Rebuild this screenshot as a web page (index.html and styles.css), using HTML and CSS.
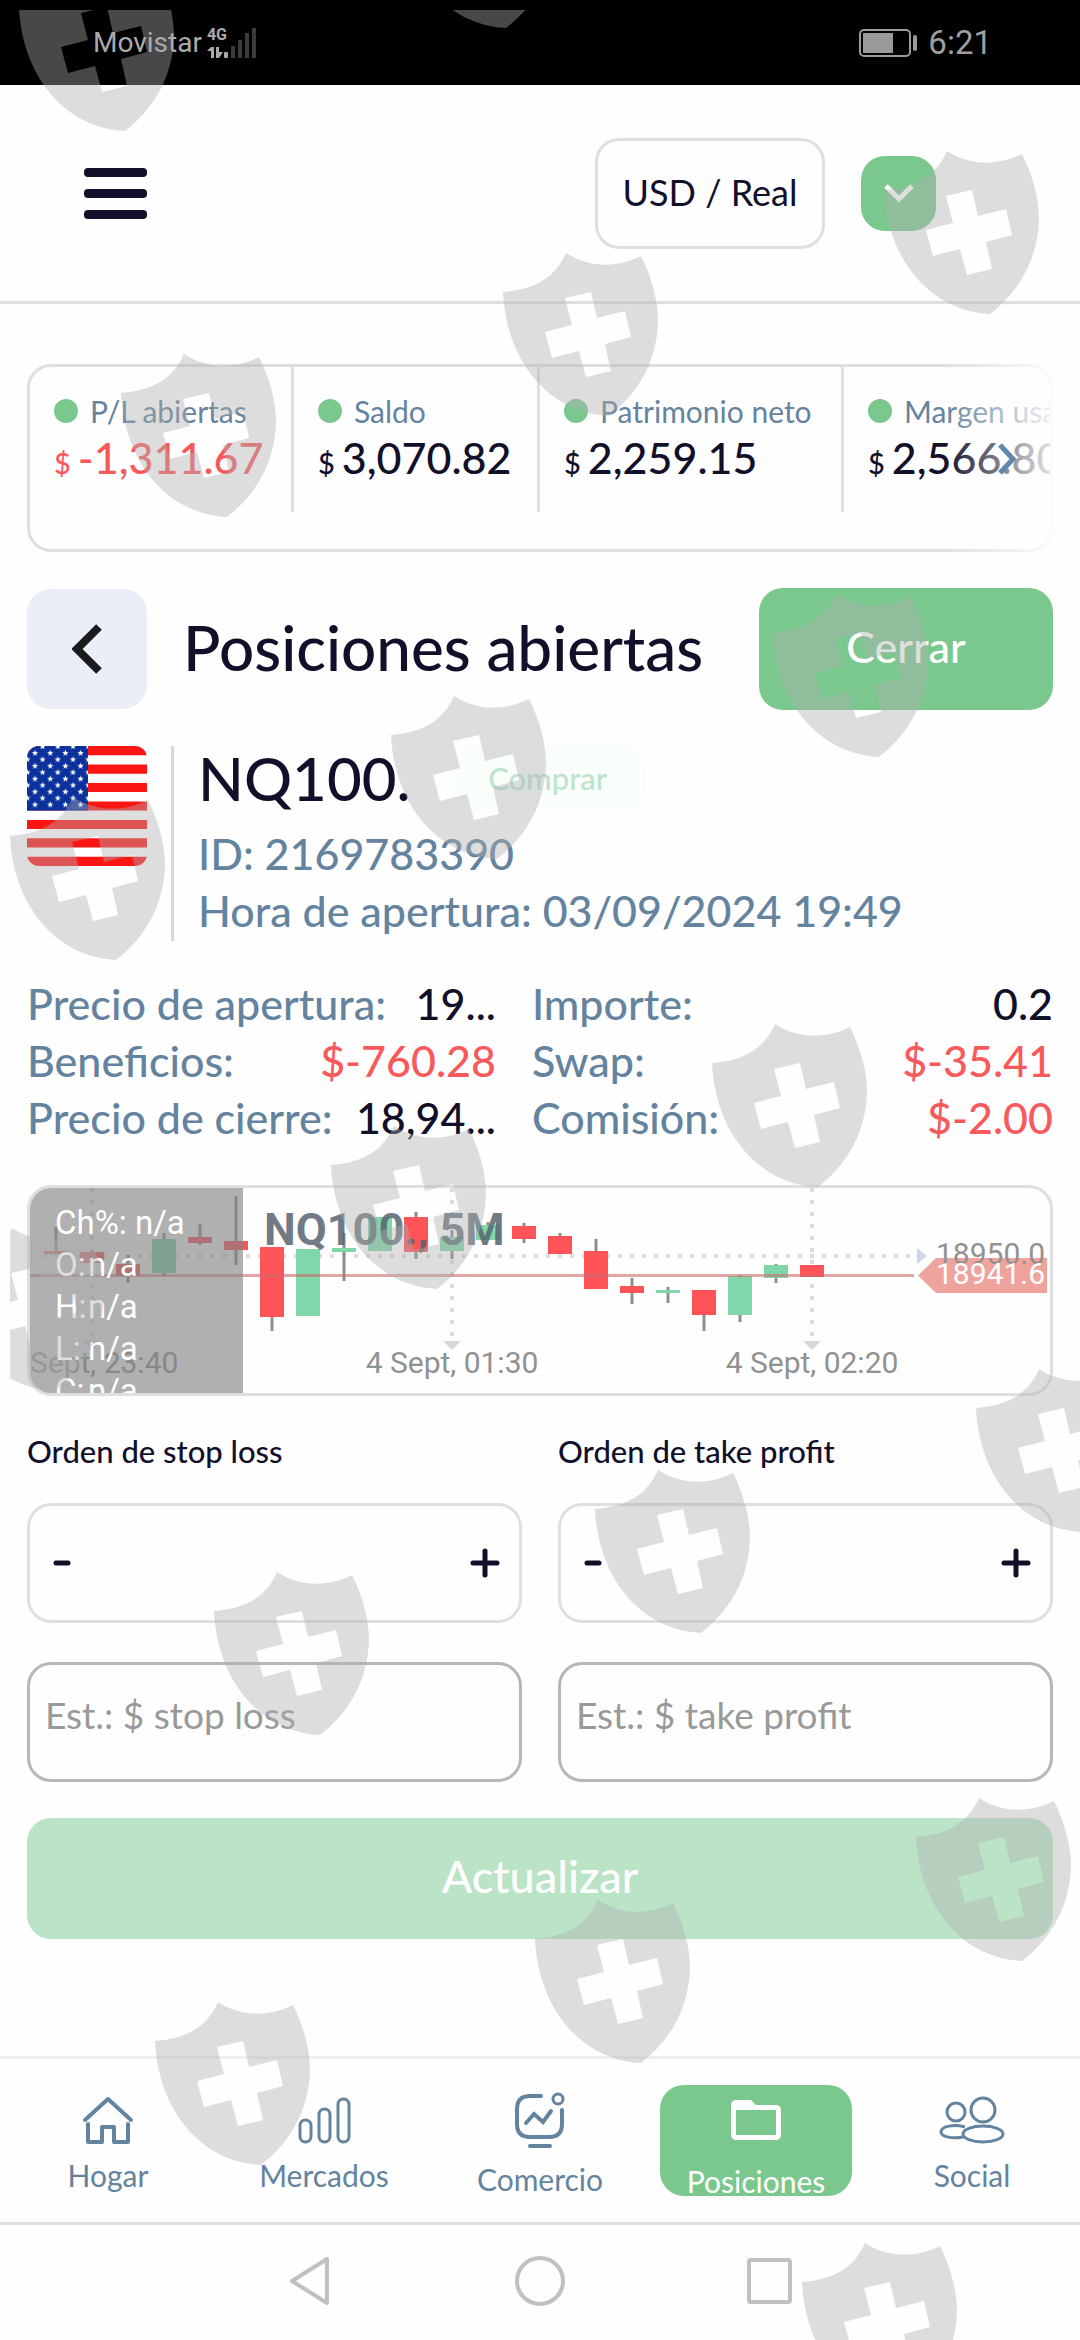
FILE: index.html
```html
<!DOCTYPE html>
<html lang="es">
<head>
<meta charset="utf-8">
<meta name="viewport" content="width=device-width, initial-scale=1">
<title>Posiciones abiertas</title>
<link rel="stylesheet" href="styles.css">
</head>
<body>
<div class="status">
  <span class="carrier">Movistar</span>
  <span class="network">
    <span class="network-type">4G</span>
    <svg width="22" height="12" viewBox="0 0 22 12" fill="#aaa"><path d="M0 4l4-4h3v11H4V4zM9 0h3v5h4l-4 6H9z"/><rect x="17" y="5" width="4" height="6" rx="1"/></svg>
  </span>
  <svg class="signal" width="26" height="30" viewBox="0 0 26 30" fill="#3b3b3b"><rect y="18" width="4" height="12"/><rect x="7" y="12" width="4" height="18"/><rect x="14" y="5" width="4" height="25"/><rect x="21" width="4" height="30"/></svg>
  <svg class="battery" width="59" height="28" viewBox="0 0 59 28"><rect x="1" y="1" width="50" height="26" rx="4" fill="none" stroke="#9a9a9a" stroke-width="2"/><rect x="4" y="4" width="30" height="20" fill="#9a9a9a"/><rect x="54" y="6" width="4" height="16" rx="2" fill="#9a9a9a"/></svg>
  <span class="clock">6:21</span>
</div>

<header class="header">
  <button class="menu" aria-label="Menú"><span></span><span></span><span></span></button>
  <button class="account">USD / Real</button>
  <button class="expand" aria-label="Desplegar"><svg width="32" height="20" viewBox="0 0 32 20" fill="none" stroke="#fff" stroke-width="5"><path d="M3 3l13 13L29 3"/></svg></button>
</header>

<main class="content">
  <div class="stats-wrap">
    <section class="stats">
      <div class="stat">
        <div class="stat-label"><i class="dot"></i>P/L abiertas</div>
        <div class="stat-value negative"><small>$</small>-1,311.67</div>
      </div>
      <div class="stat">
        <div class="stat-label"><i class="dot"></i>Saldo</div>
        <div class="stat-value"><small>$</small>3,070.82</div>
      </div>
      <div class="stat">
        <div class="stat-label"><i class="dot"></i>Patrimonio neto</div>
        <div class="stat-value"><small>$</small>2,259.15</div>
      </div>
      <div class="stat">
        <div class="stat-label"><i class="dot"></i>Margen usado</div>
        <div class="stat-value"><small>$</small>2,566.80</div>
      </div>
    </section>
    <div class="fade"><svg width="20" height="32" viewBox="0 0 20 32" fill="none" stroke="#5f88ab" stroke-width="5"><path d="M2 2l13 14L2 30"/></svg></div>
  </div>

  <div class="title-row">
    <button class="back" aria-label="Volver"><svg width="30" height="50" viewBox="0 0 30 50" fill="none" stroke="#1a1b1c" stroke-width="8"><path d="M27 3L5 25l22 22"/></svg></button>
    <h1 class="title">Posiciones abiertas</h1>
    <button class="close">Cerrar</button>
  </div>

  <section class="instrument">
    <svg class="flag" width="120" height="120" viewBox="0 0 120 120" aria-label="Estados Unidos">
      <defs>
        <path id="star" fill="#fff" d="M8 3.800l.8 2.200 2.300.1-1.800 1.500.6 2.200L8 8.500 6.100 9.800l.6-2.200L4.900 6.100 7.200 6z"/>
        <pattern id="stars" width="15.200" height="12.900" patternUnits="userSpaceOnUse">
          <use href="#star"/><use href="#star" x="-7.600" y="6.400"/><use href="#star" x="7.600" y="6.400"/><use href="#star" x="-7.600" y="-6.500"/><use href="#star" x="7.600" y="-6.500"/>
        </pattern>
      </defs>
      <rect width="120" height="120" fill="#fff"/>
      <path stroke="#fb1613" stroke-width="9.200" d="M0 4.600h120M0 23.100h120M0 41.500h120M0 60h120M0 78.500h120M0 96.900h120M0 115.400h120"/>
      <rect width="61" height="64.600" fill="#0b319c"/>
      <rect width="61" height="62" fill="url(#stars)"/>
    </svg>
    <div class="instrument-info">
      <div class="instrument-head"><h2 class="symbol">NQ100.</h2><span class="badge">Comprar</span></div>
      <p class="meta">ID: 2169783390</p>
      <p class="meta">Hora de apertura: 03/09/2024 19:49</p>
    </div>
  </section>

  <dl class="fields">
    <div class="field"><dt>Precio de apertura:</dt><dd>19...</dd></div>
    <div class="field"><dt>Importe:</dt><dd>0.2</dd></div>
    <div class="field"><dt>Beneficios:</dt><dd class="negative">$-760.28</dd></div>
    <div class="field"><dt>Swap:</dt><dd class="negative">$-35.41</dd></div>
    <div class="field"><dt>Precio de cierre:</dt><dd>18,94...</dd></div>
    <div class="field"><dt>Comisión:</dt><dd class="negative">$-2.00</dd></div>
  </dl>

  <section class="chart">
    <svg class="plot" viewBox="30 1188 1020 205">
      <g stroke="#dcdcdc" stroke-width="4" stroke-dasharray="4 8">
        <path d="M30 1256H913"/><path d="M92 1188V1336M452 1188V1336M812 1188V1336"/>
      </g>
      <path fill="#d8d8d8" d="M83 1341h18l-9 9zM443 1341h18l-9 9zM803 1341h18l-9 9z"/>
      <path fill="#cdd5e8" d="M917 1248l10 8-10 8z"/>
      <g stroke="#8e8e8e" stroke-width="3"><path d="M56 1227v27M92 1250v13M128 1255v28M164 1233v43M200 1224v21M236 1196v69M272 1247v84M344 1233v48M416 1212v47M452 1230v29M488 1222v18M524 1223v20M560 1233v20M596 1239v20M632 1278v26M668 1287v16M704 1290v41M740 1275v47M776 1264v19"/></g>
      <g fill="#ff5457"><path d="M44 1251h24v3H44zM80 1252h24v11H80zM116 1264h24v12h-24zM188 1237h24v6h-24zM224 1241h24v9h-24zM260 1247h24v70h-24zM404 1217h24v35h-24zM512 1226h24v13h-24zM548 1236h24v18h-24zM584 1251h24v38h-24zM620 1286h24v7h-24zM692 1290h24v25h-24zM800 1265h24v12h-24z"/></g>
      <g fill="#80d7a9"><path d="M152 1239h24v34h-24zM296 1249h24v67h-24zM332 1248h24v4h-24zM368 1217h24v34h-24zM440 1237h24v14h-24zM476 1225h24v15h-24zM656 1290h24v3h-24zM728 1276h24v39h-24zM764 1265h24v13h-24z"/></g>
      <path stroke="#cc6b6b" stroke-opacity=".6" stroke-width="3" d="M30 1275.500H914"/>
      <text class="plot-title" x="264" y="1245">NQ100., 5M</text>
      <g class="axis" text-anchor="middle"><text x="92" y="1373">4 Sept, 23:40</text><text x="452" y="1373">4 Sept, 01:30</text><text x="812" y="1373">4 Sept, 02:20</text></g>
      <path fill="#efa39d" d="M918 1275.500l18-17.500h111v35H936z"/>
      <text class="axis" x="936" y="1264">18950.0</text>
      <text class="axis current" x="936" y="1284">18941.6</text>
    </svg>
    <ul class="ohlc">
      <li>Ch%: n/a</li>
      <li><span>O:</span>n/a</li>
      <li><span>H:</span>n/a</li>
      <li><span>L:</span>n/a</li>
      <li><span>C:</span>n/a</li>
    </ul>
  </section>

  <form class="orders">
    <div class="order">
      <label class="order-label" for="sl">Orden de stop loss</label>
      <div class="stepper">
        <button type="button" class="step" aria-label="Menos"><svg width="18" height="30" viewBox="0 0 18 30"><path d="M3 15h12"/></svg></button>
        <input id="sl" class="amount" type="text">
        <button type="button" class="step" aria-label="Más"><svg width="30" height="30" viewBox="0 0 30 30"><path d="M3 15h24M15 3v24"/></svg></button>
      </div>
      <input class="estimate" type="text" placeholder="Est.: $ stop loss" aria-label="Est.: $ stop loss">
    </div>
    <div class="order">
      <label class="order-label" for="tp">Orden de take profit</label>
      <div class="stepper">
        <button type="button" class="step" aria-label="Menos"><svg width="18" height="30" viewBox="0 0 18 30"><path d="M3 15h12"/></svg></button>
        <input id="tp" class="amount" type="text">
        <button type="button" class="step" aria-label="Más"><svg width="30" height="30" viewBox="0 0 30 30"><path d="M3 15h24M15 3v24"/></svg></button>
      </div>
      <input class="estimate" type="text" placeholder="Est.: $ take profit" aria-label="Est.: $ take profit">
    </div>
    <button type="button" class="update">Actualizar</button>
  </form>
</main>

<nav class="tabs">
  <a class="tab" href="#hogar">
    <svg width="52" height="48" viewBox="0 0 52 48" stroke-width="4" stroke-linecap="round" stroke-linejoin="round"><path d="M3 24L26 3l23 21M6 28v18h14V31h12v15h14V28"/></svg>
    Hogar</a>
  <a class="tab" href="#mercados">
    <svg width="54" height="48" viewBox="0 0 54 48" stroke-width="3"><rect x="3" y="24" width="11" height="22" rx="5.500"/><rect x="22" y="13" width="11" height="33" rx="5.500"/><rect x="41" y="3" width="11" height="43" rx="5.500"/></svg>
    Mercados</a>
  <a class="tab" href="#comercio">
    <svg width="52" height="56" viewBox="0 0 52 56" stroke-width="4" stroke-linecap="round"><path d="M27 4H16Q3 4 3 17v15q0 13 13 13h19q13 0 13-13V18M16 54h20M12 31l8-9 9 8 8-11"/><circle cx="44" cy="7" r="5" stroke-width="3"/></svg>
    Comercio</a>
  <a class="tab active" href="#posiciones">
    <svg width="60" height="60" viewBox="0 0 24 24"><path fill="#fff" stroke="none" d="M20 6h-8l-2-2H4c-1.100 0-2 .9-2 2v12c0 1.100.9 2 2 2h16c1.100 0 2-.9 2-2V8c0-1.100-.9-2-2-2zm0 12H4V8h16z"/></svg>
    Posiciones</a>
  <a class="tab" href="#social">
    <svg width="66" height="48" viewBox="0 0 66 48" stroke-width="3"><circle cx="44" cy="14" r="12"/><ellipse cx="44" cy="38" rx="20" ry="8"/><circle cx="17" cy="16" r="9"/><path d="M26 31C15 28 2 30 2 36c0 5 12 7 22 5"/></svg>
    Social</a>
</nav>

<div class="system">
  <button aria-label="Atrás"><svg width="48" height="52" viewBox="0 0 48 52"><path d="M6 26L41 4v44z"/></svg></button>
  <button aria-label="Inicio"><svg width="52" height="52" viewBox="0 0 52 52"><circle cx="26" cy="26" r="23"/></svg></button>
  <button aria-label="Recientes"><svg width="48" height="52" viewBox="0 0 48 52"><rect x="3" y="5" width="41" height="42" rx="2"/></svg></button>
</div>

<svg class="shields" viewBox="10 10 1070 2330" preserveAspectRatio="xMinYMin slice" aria-hidden="true">
  <defs><path id="shield" fill-rule="evenodd" d="M0 39C24 37 50 30 63 0C86 15 114 15 138 3C150 27 155 50 155 68C154 107 136 140 106 163C45 160 3 107 0 39ZM62 45L88 39L94 65L122 58L128 84L102 91L108 118L83 124L76 98L49 105L42 79L69 72Z"/></defs>
  <g fill="#b0b0b0" fill-opacity=".41">
    <use href="#shield" x="19" y="-32"/><use href="#shield" x="400" y="-135"/>
    <use href="#shield" x="884" y="151"/><use href="#shield" x="503" y="253"/><use href="#shield" x="121" y="354"/>
    <use href="#shield" x="773" y="594"/><use href="#shield" x="391" y="696"/><use href="#shield" x="10" y="797"/>
    <use href="#shield" x="712" y="1024"/><use href="#shield" x="331" y="1126"/><use href="#shield" x="-51" y="1228"/>
    <use href="#shield" x="976" y="1369"/><use href="#shield" x="595" y="1470"/><use href="#shield" x="214" y="1572"/>
    <use href="#shield" x="916" y="1798"/><use href="#shield" x="535" y="1900"/><use href="#shield" x="155" y="2002"/>
    <use href="#shield" x="802" y="2243"/>
  </g>
</svg>
</body>
</html>
```
FILE: styles.css
```css
:root {
  --green: #7bc88e;
  --ink: #110f29;
  --slate: #64839e;
  --red: #f85a5c;
  --line: #dfdfdf;
}
* { box-sizing: border-box; }
body {
  margin: 0;
  min-height: 100vh;
  display: flex;
  flex-direction: column;
  position: relative;
  overflow-x: hidden;
  background: #fefefe;
  color: var(--ink);
  font-family: Lato, "Open Sans", sans-serif;
  font-size: 43px;
  font-weight: 500;
}
button, input { font: inherit; color: inherit; border: 0; padding: 0; margin: 0; background: none; }
h1, h2, p, dl, dd, ul { margin: 0; padding: 0; font-weight: 500; }
svg { display: block; flex: none; }

.status {
  display: flex;
  align-items: center;
  height: 85px;
  padding: 0 88px 0 93px;
  background: #000;
  color: #aaa;
  font-family: Roboto, sans-serif;
  font-size: 28px;
  font-weight: 400;
}
.network { display: flex; flex-direction: column; gap: 4px; margin-left: 5px; }
.network-type { font-size: 16px; line-height: 16px; font-weight: 700; }
.signal { margin-left: 2px; }
.battery { margin-left: auto; }
.clock { margin-left: 10px; font-size: 33px; color: #9f9f9f; }

.header {
  display: flex;
  align-items: center;
  height: 219px;
  padding: 0 144px 0 84px;
  border-bottom: 3px solid var(--line);
}
.menu { display: flex; flex-direction: column; gap: 12px; width: 63px; margin-right: auto; }
.menu span { height: 9px; border-radius: 4px; background: var(--ink); }
.account { width: 230px; height: 111px; padding-bottom: 3px; border: 3px solid var(--line); border-radius: 24px; font-size: 36px; font-weight: 400; }
.expand {
  display: grid;
  place-items: center;
  width: 75px;
  height: 75px;
  margin-left: 36px;
  border-radius: 24px;
  background: var(--green);
}

.content { flex: 1; padding: 60px 27px 36px; }
.stats-wrap { position: relative; }
.stats {
  display: grid;
  grid-template-columns: 264px 246px 304px 1fr;
  height: 188px;
  border: 3px solid var(--line);
  border-radius: 24px;
  overflow: hidden;
}
.stat { height: 145px; padding: 24px 0 0 24px; border-right: 3px solid var(--line); white-space: nowrap; min-width: 0; }
.stat:last-child { border-right: 0; }
.stat-label { display: flex; align-items: center; gap: 12px; font-size: 30px; line-height: 40px; font-weight: 400; color: var(--slate); }
.dot { flex: none; width: 24px; height: 24px; border-radius: 50%; background: var(--green); }
.stat-value { font-size: 43px; line-height: 54px; }
.stat-value small { font-size: 29px; margin-right: 7px; }
.negative { color: var(--red); }
.fade {
  position: absolute;
  top: 0;
  right: 0;
  bottom: 0;
  width: 110px;
  padding: 79px 0 0 55px;
  background: linear-gradient(90deg, rgba(254,254,254,0), rgba(254,254,254,.9));
}

.title-row { display: flex; align-items: center; margin-top: 36px; }
.back { display: grid; place-items: center; width: 120px; height: 120px; border-radius: 24px; background: #ebeef7; }
.title { flex: 1; padding: 0 0 4px 36px; font-size: 62px; line-height: 72px; white-space: nowrap; }
.close { width: 294px; height: 122px; padding-bottom: 5px; border-radius: 24px; background: var(--green); color: #fff; }

.instrument { display: flex; align-items: flex-start; gap: 24px; margin-top: 36px; }
.flag { border-radius: 12px; }
.instrument-info { flex: 1; height: 195px; padding-left: 24px; border-left: 3px solid #d8d8d8; }
.instrument-head { display: flex; align-items: flex-start; gap: 40px; margin-bottom: 15px; }
.symbol { font-size: 60px; line-height: 64px; }
.badge { width: 194px; border-radius: 18px; background: #f9fefb; color: #bce4cd; font-size: 31px; line-height: 64px; text-align: center; }
.meta { line-height: 57px; color: var(--slate); }

.fields { display: grid; grid-template-columns: 9fr 10fr; column-gap: 36px; margin: 34px 0 39px; line-height: 57px; }
.field { display: flex; justify-content: space-between; white-space: nowrap; }
.field dt { color: var(--slate); }

.chart { position: relative; border: 3px solid var(--line); border-radius: 24px; overflow: hidden; font-family: Roboto, sans-serif; font-weight: 400; }
.plot { width: 100%; }
.plot-title { font-size: 45px; font-weight: 700; fill: #56636f; fill-opacity: .85; }
.axis { font-size: 30px; fill: #919191; }
.current { fill: #fff; }
.ohlc {
  position: absolute;
  top: 0;
  left: 0;
  width: 213px;
  height: 100%;
  padding: 14px 0 0 25px;
  overflow: hidden;
  list-style: none;
  background: rgba(130,130,130,.63);
  color: #fff;
  font-size: 33px;
  font-weight: 400;
  line-height: 42px;
}
.ohlc span { display: inline-block; width: 33px; }

.orders { display: grid; grid-template-columns: 1fr 1fr; gap: 36px; margin-top: 37px; }
.order { min-width: 0; display: flex; flex-direction: column; }
.order-label { font-size: 31px; line-height: 36px; margin-bottom: 34px; }
.stepper { display: flex; align-items: center; height: 120px; padding: 0 19px 0 23px; border: 3px solid var(--line); border-radius: 24px; }
.amount { flex: 1; min-width: 0; height: 100%; outline: 0; }
.step svg { fill: none; stroke: var(--ink); stroke-width: 5; stroke-linecap: round; }
.estimate { height: 120px; margin-top: 39px; padding: 0 15px 16px; border: 3px solid #b7b7b7; border-radius: 24px; font-size: 37px; font-weight: 400; }
.estimate::placeholder { color: #999; opacity: 1; }
.update { grid-column: 1 / -1; height: 121px; padding-bottom: 5px; border-radius: 24px; background: #bbe4c7; color: #fff; font-size: 45px; }

.tabs {
  display: grid;
  grid-template-columns: repeat(5, 1fr);
  align-items: center;
  height: 169px;
  border-top: 3px solid #eee;
  border-bottom: 3px solid var(--line);
}
.tab {
  display: flex;
  flex-direction: column;
  align-items: center;
  gap: 13px;
  padding-top: 8px;
  color: var(--slate);
  font-size: 30px;
  font-weight: 400;
  line-height: 36px;
  text-decoration: none;
}
.tab svg { fill: none; stroke: currentColor; }
.active { height: 111px; margin: 0 12px; padding-top: 5px; border-radius: 24px; background: var(--green); color: #fff; }

.system { display: flex; align-items: center; justify-content: center; gap: 180px; height: 115px; padding-bottom: 3px; }
.system svg { fill: none; stroke: #c0c0c0; stroke-width: 4; stroke-linejoin: round; }

.shields { position: absolute; top: 10px; left: 10px; width: calc(100% - 10px); height: calc(100% - 10px); pointer-events: none; }
```
